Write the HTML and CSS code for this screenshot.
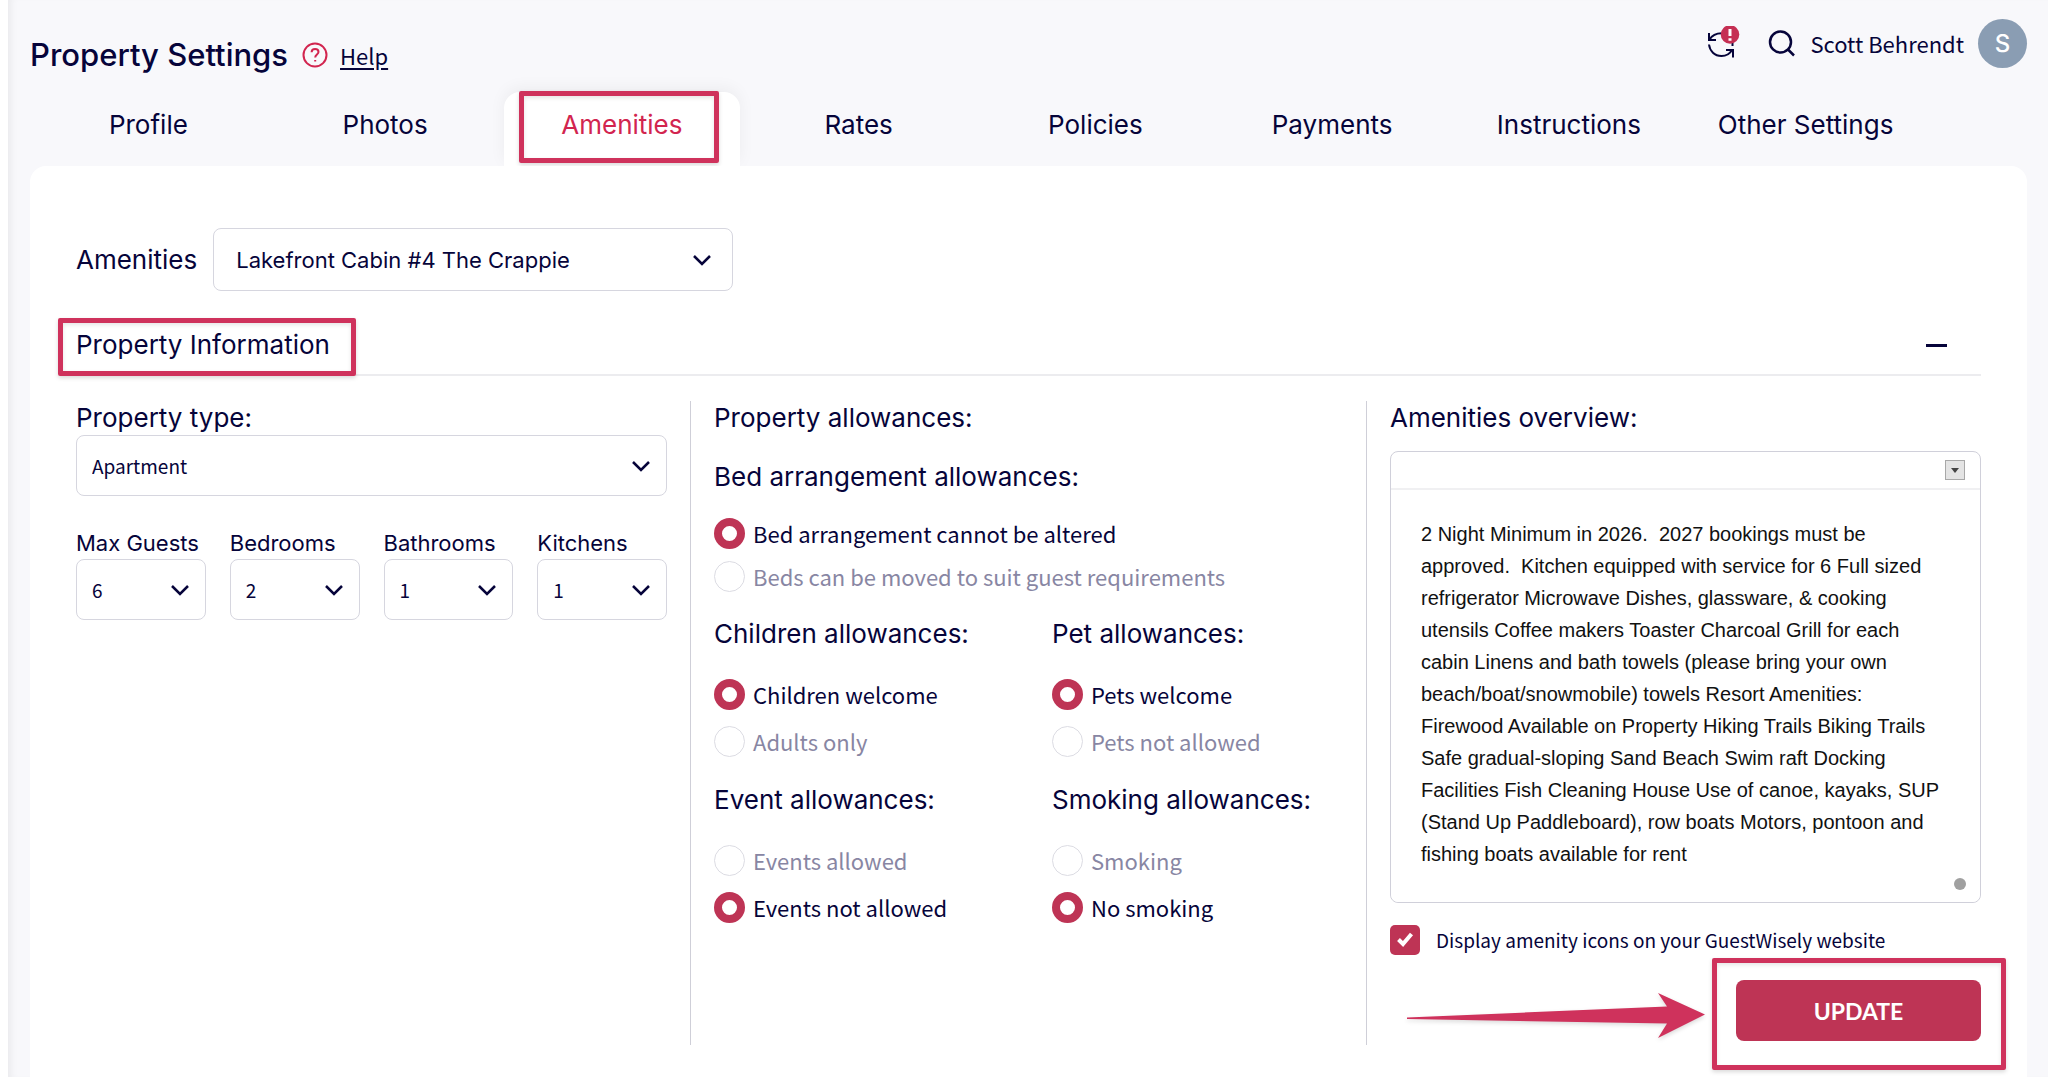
FILE: index.html
```html
<!DOCTYPE html>
<html lang="en">
<head>
    <meta charset="UTF-8">
    <meta name="viewport" content="width=device-width, initial-scale=1.0">
    <title>Property Settings</title>
    <link rel="stylesheet" href="styles.css">
</head>
<body>
    <div class="page">
        <header class="topbar">
            <h1>Property Settings</h1>
            <a href="#" class="help">
                <svg class="help-icon" viewBox="0 0 26 26" aria-hidden="true">
                    <circle cx="13" cy="13" r="11.5"/>
                    <path d="M9.6 10.2c0-2 1.5-3.3 3.5-3.3s3.4 1.3 3.4 3.1c0 2.4-3.3 2.6-3.3 5.4M13.2 18v1.6"/>
                </svg>
                <span>Help</span>
            </a>
            <div class="account">
                <button type="button" class="icon-button" aria-label="Sync">
                    <svg class="sync-icon" viewBox="0 0 34 34" aria-hidden="true">
                        <path d="M3 7v7h7M3.500 13.500C6 9.500 10 7.300 15.500 7.300M3 18.500c.8 6.500 5.500 11.500 12.500 11.500 4.500 0 8.500-2.500 10.500-6M20 24h7v7.500M26.500 17v3"/>
                        <circle cx="24" cy="8.5" r="9.3"/>
                        <path class="mark" d="M24 3v7M24 12.200v2.600"/>
                    </svg>
                </button>
                <button type="button" class="icon-button" aria-label="Search">
                    <svg class="search-icon" viewBox="0 0 28 28" aria-hidden="true">
                        <circle cx="12.5" cy="13" r="10.5"/>
                        <path d="M20 20.500l6 6"/>
                    </svg>
                </button>
                <span class="user-name">Scott Behrendt</span>
                <span class="avatar">S</span>
            </div>
        </header>

        <nav class="tabs">
            <a href="#">Profile</a>
            <a href="#">Photos</a>
            <a href="#" class="active">Amenities</a>
            <a href="#">Rates</a>
            <a href="#">Policies</a>
            <a href="#">Payments</a>
            <a href="#">Instructions</a>
            <a href="#">Other Settings</a>
        </nav>

        <main class="card">
            <div class="picker">
                <label for="property">Amenities</label>
                <div class="select select-large">
                    <select id="property">
                        <option>Lakefront Cabin #4 The Crappie</option>
                    </select>
                    <svg viewBox="0 0 18 12" aria-hidden="true"><path d="M1 2l8 8 8-8"/></svg>
                </div>
            </div>

            <div class="section-title">
                <h2>Property Information</h2>
                <button type="button" class="collapse" aria-label="Collapse"></button>
            </div>

            <form class="columns">
                <section class="column">
                    <label class="heading" for="type">Property type:</label>
                    <div class="select">
                        <select id="type">
                            <option>Apartment</option>
                        </select>
                        <svg viewBox="0 0 18 12" aria-hidden="true"><path d="M1 2l8 8 8-8"/></svg>
                    </div>
                    <div class="counts">
                        <div>
                            <label for="guests">Max Guests</label>
                            <div class="select">
                                <select id="guests"><option>6</option></select>
                                <svg viewBox="0 0 18 12" aria-hidden="true"><path d="M1 2l8 8 8-8"/></svg>
                            </div>
                        </div>
                        <div>
                            <label for="bedrooms">Bedrooms</label>
                            <div class="select">
                                <select id="bedrooms"><option>2</option></select>
                                <svg viewBox="0 0 18 12" aria-hidden="true"><path d="M1 2l8 8 8-8"/></svg>
                            </div>
                        </div>
                        <div>
                            <label for="bathrooms">Bathrooms</label>
                            <div class="select">
                                <select id="bathrooms"><option>1</option></select>
                                <svg viewBox="0 0 18 12" aria-hidden="true"><path d="M1 2l8 8 8-8"/></svg>
                            </div>
                        </div>
                        <div>
                            <label for="kitchens">Kitchens</label>
                            <div class="select">
                                <select id="kitchens"><option>1</option></select>
                                <svg viewBox="0 0 18 12" aria-hidden="true"><path d="M1 2l8 8 8-8"/></svg>
                            </div>
                        </div>
                    </div>
                </section>

                <section class="column">
                    <h3 class="heading">Property allowances:</h3>
                    <div class="group beds">
                        <h3 class="heading">Bed arrangement allowances:</h3>
                        <label class="radio"><input type="radio" name="beds" checked><span>Bed arrangement cannot be altered</span></label>
                        <label class="radio"><input type="radio" name="beds"><span>Beds can be moved to suit guest requirements</span></label>
                    </div>
                    <div class="allowances">
                        <div class="group">
                            <h3 class="heading">Children allowances:</h3>
                            <label class="radio"><input type="radio" name="children" checked><span>Children welcome</span></label>
                            <label class="radio"><input type="radio" name="children"><span>Adults only</span></label>
                        </div>
                        <div class="group">
                            <h3 class="heading">Pet allowances:</h3>
                            <label class="radio"><input type="radio" name="pets" checked><span>Pets welcome</span></label>
                            <label class="radio"><input type="radio" name="pets"><span>Pets not allowed</span></label>
                        </div>
                        <div class="group">
                            <h3 class="heading">Event allowances:</h3>
                            <label class="radio"><input type="radio" name="events"><span>Events allowed</span></label>
                            <label class="radio"><input type="radio" name="events" checked><span>Events not allowed</span></label>
                        </div>
                        <div class="group">
                            <h3 class="heading">Smoking allowances:</h3>
                            <label class="radio"><input type="radio" name="smoking"><span>Smoking</span></label>
                            <label class="radio"><input type="radio" name="smoking" checked><span>No smoking</span></label>
                        </div>
                    </div>
                </section>

                <section class="column">
                    <label class="heading" for="overview">Amenities overview:</label>
                    <div class="editor">
                        <div class="editor-toolbar">
                            <button type="button" aria-label="Toolbar options">
                                <svg viewBox="0 0 8 5" aria-hidden="true"><path d="M0 0h8L4 5z"/></svg>
                            </button>
                        </div>
                        <textarea id="overview" rows="11" spellcheck="false">2 Night Minimum in 2026.  2027 bookings must be approved.  Kitchen equipped with service for 6 Full sized refrigerator Microwave Dishes, glassware, &amp; cooking utensils Coffee makers Toaster Charcoal Grill for each cabin Linens and bath towels (please bring your own beach/boat/snowmobile) towels Resort Amenities: Firewood Available on Property Hiking Trails Biking Trails Safe gradual-sloping Sand Beach Swim raft Docking Facilities Fish Cleaning House Use of canoe, kayaks, SUP (Stand Up Paddleboard), row boats Motors, pontoon and fishing boats available for rent</textarea>
                        <span class="grip"></span>
                    </div>
                    <div class="check">
                        <span class="check-box">
                            <input type="checkbox" id="icons" checked>
                            <svg viewBox="0 0 18 16" aria-hidden="true"><path d="M2.500 8.500l4.500 4.500 8.500-10"/></svg>
                        </span>
                        <label for="icons">Display amenity icons on your GuestWisely website</label>
                    </div>
                    <div class="actions">
                        <svg class="arrow" viewBox="0 0 298 46" aria-hidden="true">
                            <path d="M0 24.500L260 13.500 251 0 298 21.500 251 45 260 30.500 0 26z"/>
                        </svg>
                        <div class="update">
                            <button type="submit">UPDATE</button>
                        </div>
                    </div>
                </section>
            </form>
        </main>
    </div>
</body>
</html>
```

FILE: styles.css
```css
* {
    margin: 0;
    padding: 0;
    box-sizing: border-box;
}

body {
    font-family: "Noto Sans CJK SC", sans-serif;
    color: #06043a;
    background-color: #ffffff;
    padding-left: 8px;
}

a {
    color: inherit;
    text-decoration: none;
}

button {
    border: none;
    background: none;
    cursor: pointer;
}

svg {
    display: block;
    fill: none;
    stroke: currentColor;
}

h1, h2, h3, .tabs, .picker, .heading, .counts label, .avatar, .update {
    font-family: Inter, sans-serif;
    font-weight: normal;
}

.page {
    min-height: 100vh;
    display: flex;
    flex-direction: column;
    background-color: #f8f8fb;
    box-shadow: inset 8px 0 8px -6px rgba(0, 0, 0, 0.07);
    padding: 0 21px 0 22px;
}

/* Top bar */
.topbar {
    display: flex;
    align-items: center;
    height: 92px;
    padding-top: 18px;
}

h1 {
    font-size: 31px;
    line-height: 40px;
    font-weight: 500;
}

.help {
    display: flex;
    align-items: center;
    gap: 12px;
    margin-left: 14px;
    font-size: 22px;
    line-height: 32px;
}

.help span {
    text-decoration: underline;
    text-underline-offset: 3px;
}

.help-icon {
    width: 26px;
    height: 26px;
    color: #d2254f;
    stroke-width: 2;
}

.account {
    display: flex;
    align-items: center;
    margin-left: auto;
    align-self: flex-start;
    height: 50px;
    gap: 14px;
}

.icon-button {
    color: inherit;
}

.sync-icon {
    width: 34px;
    height: 34px;
    margin-right: 14px;
    stroke-width: 2;
}

.sync-icon circle {
    fill: #c52f53;
    stroke: none;
}

.sync-icon .mark {
    stroke: #ffffff;
    stroke-width: 3;
}

.search-icon {
    width: 28px;
    height: 28px;
    stroke-width: 2.5;
}

.user-name {
    font-size: 22px;
    line-height: 32px;
}

.avatar {
    width: 49px;
    height: 49px;
    border-radius: 50%;
    background-color: #8a9db3;
    color: #ffffff;
    font-size: 24px;
    font-weight: 500;
    line-height: 50px;
    text-align: center;
}

/* Tabs */
.tabs {
    display: grid;
    grid-template-columns: repeat(8, 1fr);
    padding-right: 103px;
    font-size: 26px;
}

.tabs a {
    height: 74px;
    line-height: 66px;
    text-align: center;
}

.tabs .active {
    position: relative;
    color: #d2254f;
    background-color: #ffffff;
    border-radius: 16px 16px 0 0;
    box-shadow: 0 -4px 16px rgba(0, 0, 0, 0.05);
}

/* Marker frames drawn round the highlighted parts */
.tabs .active::after,
.section-title h2::after,
.update::after {
    content: "";
    position: absolute;
    border: 5px solid #cf325c;
    border-radius: 2px;
    box-shadow: 0 2px 4px rgba(0, 0, 0, 0.15), inset 0 2px 4px rgba(0, 0, 0, 0.1);
    pointer-events: none;
}

.tabs .active::after {
    top: -1px;
    bottom: 3px;
    left: 15px;
    right: 21px;
}

.card {
    position: relative;
    flex: 1;
    background-color: #ffffff;
    border-radius: 16px 16px 0 0;
    padding: 62px 46px 8px;
}

/* Selects */
.select {
    position: relative;
}

.select select {
    appearance: none;
    width: 100%;
    height: 61px;
    padding: 0 48px 0 15px;
    border: 1px solid #d6d6df;
    border-radius: 8px;
    background-color: #ffffff;
    color: inherit;
    font-family: inherit;
    font-size: 19px;
}

.select svg {
    position: absolute;
    right: 17px;
    top: 50%;
    width: 18px;
    height: 12px;
    margin-top: -6px;
    stroke-width: 2.5;
    pointer-events: none;
}

.select-large {
    width: 520px;
}

.select-large select {
    height: 63px;
    padding-left: 22px;
    font-size: 22px;
}

.select-large svg {
    right: 22px;
}

.picker {
    display: flex;
    align-items: center;
    gap: 16px;
    font-size: 26px;
}

.section-title {
    display: flex;
    align-items: center;
    justify-content: space-between;
    height: 85px;
    padding: 25px 34px 0 0;
    border-bottom: 2px solid #ececef;
}

h2 {
    position: relative;
    font-size: 26px;
    line-height: 32px;
}

.section-title h2::after {
    top: -11px;
    bottom: -15px;
    left: -18px;
    right: -26px;
}

.collapse {
    width: 21px;
    height: 3px;
    background-color: #06043a;
}

/* Three columns */
.columns {
    display: grid;
    grid-template-columns: 614fr 676fr 615fr;
    padding-top: 25px;
}

.column {
    min-height: 644px;
}

.column:first-child {
    padding-right: 23px;
}

.column + .column {
    padding-left: 23px;
    border-left: 1px solid #cfcfd8;
}

.heading {
    display: block;
    font-size: 26px;
    line-height: 34px;
}

.counts {
    display: grid;
    grid-template-columns: repeat(4, 1fr);
    gap: 24px;
    margin-top: 31px;
}

.counts label {
    display: block;
    font-size: 22px;
    line-height: 32px;
    white-space: nowrap;
}

.group {
    display: flex;
    flex-direction: column;
    gap: 16px;
}

.group .heading {
    margin-bottom: 12px;
}

.beds {
    gap: 12px;
    margin-top: 25px;
}

.allowances {
    display: grid;
    grid-template-columns: 338fr 314fr;
    row-gap: 26px;
    margin-top: 25px;
}

.radio {
    display: flex;
    align-items: center;
    gap: 8px;
    height: 31px;
    font-size: 22px;
    line-height: 31px;
    white-space: nowrap;
}

.radio input {
    appearance: none;
    width: 31px;
    height: 31px;
    border: 1px solid #dcdce3;
    border-radius: 50%;
    background-color: #ffffff;
}

.radio span {
    color: #8886a3;
}

.radio input:checked {
    border: 8px solid #be3455;
}

.radio input:checked + span {
    color: #06043a;
}

/* Overview editor */
.editor {
    position: relative;
    margin-top: 16px;
    border: 1px solid #d0d0da;
    border-radius: 8px;
}

.editor-toolbar {
    display: flex;
    justify-content: flex-end;
    align-items: center;
    height: 38px;
    padding-right: 15px;
    border-bottom: 2px solid #f0f0f2;
}

.editor-toolbar button {
    display: flex;
    align-items: center;
    justify-content: center;
    width: 20px;
    height: 20px;
    border: 1px solid #a8a8a8;
    background-color: #e4e4e4;
}

.editor-toolbar svg {
    width: 8px;
    height: 5px;
    fill: #444444;
    stroke: none;
}

textarea {
    display: block;
    width: 100%;
    padding: 28px 30px 32px;
    border: none;
    border-radius: 8px;
    resize: none;
    overflow: hidden;
    color: #111111;
    font-family: "Liberation Sans", Arial, sans-serif;
    font-size: 20px;
    line-height: 32px;
}

.grip {
    position: absolute;
    right: 14px;
    bottom: 12px;
    width: 12px;
    height: 12px;
    border-radius: 50%;
    background-color: #a0a0a0;
}

.check {
    display: flex;
    align-items: center;
    gap: 16px;
    margin-top: 22px;
    font-size: 19px;
    line-height: 30px;
    white-space: nowrap;
}

.check-box {
    position: relative;
}

.check-box input {
    appearance: none;
    display: block;
    width: 30px;
    height: 30px;
    border-radius: 5px;
    background-color: #be3455;
}

.check-box svg {
    position: absolute;
    left: 6px;
    top: 6px;
    width: 18px;
    height: 16px;
    color: #ffffff;
    stroke-width: 4;
    pointer-events: none;
}

.actions {
    display: flex;
    justify-content: flex-end;
    gap: 31px;
    margin-top: 25px;
}

.arrow {
    width: 298px;
    height: 46px;
    margin-top: 13px;
    fill: #cf325c;
    stroke: none;
    filter: drop-shadow(0 2px 2px rgba(0, 0, 0, 0.15));
}

.update {
    position: relative;
}

.update::after {
    top: -22px;
    bottom: -29px;
    left: -24px;
    right: -25px;
}

.update button {
    width: 245px;
    height: 61px;
    border-radius: 8px;
    background-color: #be3455;
    color: #ffffff;
    font-family: Lato, sans-serif;
    font-size: 23px;
    font-weight: bold;
}
```
